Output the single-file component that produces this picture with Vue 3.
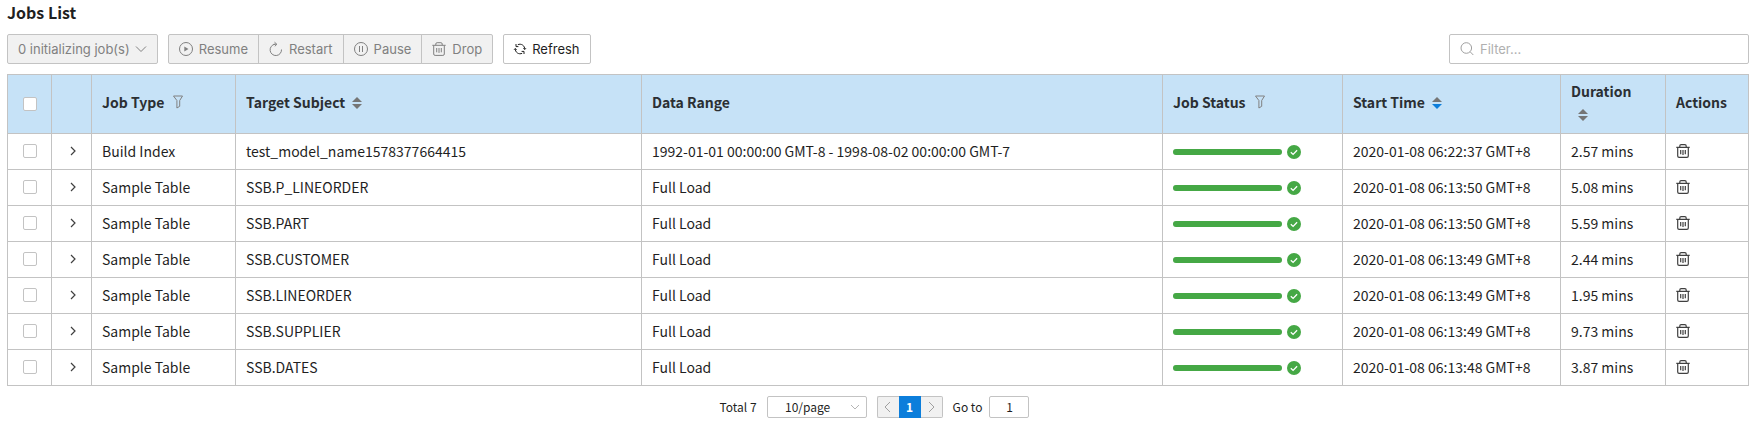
<script setup>
import { ref } from 'vue'

const filter = ref('')
const pageSize = ref('10')
const goTo = ref('1')

const rows = ref([
  ['Build Index', 'test_model_name1578377664415', '1992-01-01 00:00:00 GMT-8 - 1998-08-02 00:00:00 GMT-7', '2020-01-08 06:22:37 GMT+8', '2.57 mins'],
  ['Sample Table', 'SSB.P_LINEORDER', 'Full Load', '2020-01-08 06:13:50 GMT+8', '5.08 mins'],
  ['Sample Table', 'SSB.PART', 'Full Load', '2020-01-08 06:13:50 GMT+8', '5.59 mins'],
  ['Sample Table', 'SSB.CUSTOMER', 'Full Load', '2020-01-08 06:13:49 GMT+8', '2.44 mins'],
  ['Sample Table', 'SSB.LINEORDER', 'Full Load', '2020-01-08 06:13:49 GMT+8', '1.95 mins'],
  ['Sample Table', 'SSB.SUPPLIER', 'Full Load', '2020-01-08 06:13:49 GMT+8', '9.73 mins'],
  ['Sample Table', 'SSB.DATES', 'Full Load', '2020-01-08 06:13:48 GMT+8', '3.87 mins'],
].map(([type, target, range, start, duration]) => ({ type, target, range, start, duration, progress: 100, checked: false })))
</script>

<template>
  <main class="jobs">
    <svg class="defs" aria-hidden="true">
      <symbol id="trash" viewBox="0 0 14 14">
        <path d="M.3 3.300h13.400M3.800 3.300V2Q3.800.7 5.100.7h3.800Q10.200.7 10.200 2v1.300M1.700 3.500v8.500q0 1.400 1.400 1.400h7.800q1.400 0 1.400-1.400V3.500M4.700 6v4.300M7 6v4.900M9.300 6v4.300" />
      </symbol>
      <symbol id="funnel" viewBox="0 0 10 14">
        <path d="M.5 1h9L6.700 5.500v5.800L3.900 13V5.500z" />
      </symbol>
    </svg>

    <h1>Jobs List</h1>

    <div class="toolbar">
      <button class="btn menu" disabled>
        0 initializing job(s)
        <svg class="chev" viewBox="0 0 12 12"><path d="M1 3.500l5 5 5-5" /></svg>
      </button>
      <div class="group">
        <button class="btn" disabled>
          <svg viewBox="0 0 14 14"><circle cx="7" cy="7" r="6.500" /><path class="solid" d="M5.300 4.500v5L9.500 7z" /></svg>
          Resume
        </button>
        <button class="btn" disabled>
          <svg viewBox="0 0 14 14"><path d="M6 2.200A5.700 5.700 0 1 0 12.500 7.500M4.500 2.400L7.500 2.100M5.500.2L7.700 2.100 6 4.300" /></svg>
          Restart
        </button>
        <button class="btn" disabled>
          <svg viewBox="0 0 14 14"><circle cx="7" cy="7" r="6.500" /><path d="M5.500 4v6M8.500 4v6" /></svg>
          Pause
        </button>
        <button class="btn" disabled>
          <svg><use href="#trash" /></svg>
          Drop
        </button>
      </div>
      <button class="btn active">
        <svg viewBox="0 0 12 12"><path d="M3.800 1.700A4.800 4.800 0 0 1 10.700 6.300M8.200 10.300A4.800 4.800 0 0 1 1.300 5.700M2 1v2.600h2.400M10 11V8.400H7.600M0 6.800l1.300-1.300L2.600 6.800M9.400 5.200l1.300 1.300L12 5.200" /></svg>
        Refresh
      </button>
      <label class="search">
        <svg viewBox="0 0 14 14"><circle cx="6.300" cy="6" r="5.300" /><path d="M10.200 9.800L13.300 13" /></svg>
        <input v-model="filter" type="text" placeholder="Filter..." aria-label="Filter jobs">
      </label>
    </div>

    <table>
      <colgroup>
        <col class="c-check"><col class="c-expand"><col class="c-type"><col class="c-target"><col>
        <col class="c-status"><col class="c-start"><col class="c-duration"><col class="c-actions">
      </colgroup>
      <thead>
        <tr>
          <th class="center"><input type="checkbox" aria-label="Select all jobs"></th>
          <th></th>
          <th>Job Type<svg class="funnel"><use href="#funnel" /></svg></th>
          <th>Target Subject<svg class="sort" viewBox="0 0 10 12"><path d="M0 5l5-5 5 5z" /><path d="M0 7l5 5 5-5z" /></svg></th>
          <th>Data Range</th>
          <th>Job Status<svg class="funnel"><use href="#funnel" /></svg></th>
          <th>Start Time<svg class="sort" viewBox="0 0 10 12"><path d="M0 5l5-5 5 5z" /><path class="on" d="M0 7l5 5 5-5z" /></svg></th>
          <th>Duration <svg class="sort" viewBox="0 0 10 12"><path d="M0 5l5-5 5 5z" /><path d="M0 7l5 5 5-5z" /></svg></th>
          <th>Actions</th>
        </tr>
      </thead>
      <tbody>
        <tr v-for="row in rows" :key="row.target">
          <td class="center"><input v-model="row.checked" type="checkbox" :aria-label="'Select ' + row.target"></td>
          <td class="center">
            <button class="icon expand" :aria-label="'Expand ' + row.target"><svg viewBox="0 0 12 12"><path d="M4 2l4 4-4 4" /></svg></button>
          </td>
          <td>{{ row.type }}</td>
          <td>{{ row.target }}</td>
          <td>{{ row.range }}</td>
          <td class="progress">
            <div class="status">
              <div class="track"><div class="bar" :style="{ width: row.progress + '%' }"></div></div>
              <svg viewBox="0 0 14 14"><circle cx="7" cy="7" r="7" /><path d="M3.800 7.200l2.300 2.200 4-4.200" /></svg>
            </div>
          </td>
          <td>{{ row.start }}</td>
          <td>{{ row.duration }}</td>
          <td><button class="icon" :aria-label="'Drop ' + row.target"><svg><use href="#trash" /></svg></button></td>
        </tr>
      </tbody>
    </table>

    <nav class="pagination" aria-label="Pagination">
      <span>Total 7</span>
      <div class="size">
        <select v-model="pageSize" aria-label="Rows per page">
          <option value="10">10/page</option>
          <option value="20">20/page</option>
        </select>
        <svg viewBox="0 0 12 12"><path d="M2 4l4 4 4-4" /></svg>
      </div>
      <div class="pager">
        <button disabled aria-label="Previous page"><svg viewBox="0 0 12 12"><path d="M8 1L3 6l5 5" /></svg></button>
        <button class="current">1</button>
        <button disabled aria-label="Next page"><svg viewBox="0 0 12 12"><path d="M4 1l5 5-5 5" /></svg></button>
      </div>
      <label class="goto">Go to <input v-model="goTo" type="text"></label>
    </nav>
  </main>
</template>

<style>
body { background: #fff; }
</style>

<style scoped>
* { box-sizing: border-box; }
.jobs {
  padding: 0 6px 0 7px;
  color: #1f1f1f;
  font: 14px/20px "Noto Sans CJK SC", "Noto Sans", sans-serif;
}
svg { flex: none; width: 14px; height: 14px; fill: none; stroke: currentColor; stroke-width: 1; overflow: visible; }
.defs { position: absolute; width: 0; height: 0; }
button { cursor: pointer; }
button:disabled { cursor: not-allowed; }
h1 { margin: 0; padding: 2px 0 12px; font-size: 16px; line-height: 20px; font-weight: 700; }

.toolbar { display: flex; gap: 10px; margin-bottom: 10px; }
.btn {
  display: flex;
  align-items: center;
  gap: 6px;
  height: 30px;
  padding: 0 10px;
  border: 1px solid #c3c3c3;
  border-radius: 2px;
  background: #f1f1f1;
  color: #808080;
  font: 13px/20px Inter, "Liberation Sans", sans-serif;
  white-space: nowrap;
}
.btn.menu { gap: 5px; }
.btn.active { background: #fff; color: #1f1f1f; }
.btn.active svg { width: 12px; height: 12px; }
.btn .solid { fill: currentColor; stroke: none; }
.btn .chev { width: 12px; height: 12px; }
.group { display: flex; }
.group .btn { border-radius: 0; }
.group .btn + .btn { margin-left: -1px; }
.group .btn:first-child { border-radius: 2px 0 0 2px; }
.group .btn:last-child { border-radius: 0 2px 2px 0; }
.search {
  display: flex;
  align-items: center;
  gap: 6px;
  width: 300px;
  height: 30px;
  margin-left: auto;
  padding: 0 10px;
  border: 1px solid #c3c3c3;
  border-radius: 2px;
  color: #a0a0a0;
}
.search input { flex: 1; min-width: 0; padding: 0; border: 0; outline: 0; background: none; color: #1f1f1f; font: 13px/20px Inter, "Liberation Sans", sans-serif; }
.search input::placeholder { color: #b0b0b0; opacity: 1; }

table { width: 100%; table-layout: fixed; border-collapse: collapse; }
th, td { border: 1px solid #c3c3c3; padding: 0 10px 2px; text-align: left; vertical-align: middle; }
th { height: 59px; padding-bottom: 3px; background: #c6e2f7; color: #2b2f33; font-weight: 700; line-height: 23px; }
td { height: 36px; white-space: nowrap; }
.center { padding: 0 0 1px; text-align: center; }
.progress { padding-bottom: 0; }
.c-check { width: 44px; }
.c-expand { width: 40px; }
.c-type { width: 144px; }
.c-target { width: 406px; }
.c-status { width: 180px; }
.c-start { width: 218px; }
.c-duration { width: 105px; }
.c-actions { width: 83px; }
input[type="checkbox"] {
  appearance: none;
  display: block;
  width: 14px;
  height: 14px;
  margin: 0 auto;
  border: 1px solid #c3c3c3;
  border-radius: 2px;
  background: #fff;
}
input[type="checkbox"]:checked { background: #0c7edb; }
.funnel { width: 10px; height: 14px; margin-left: 9px; vertical-align: -1px; color: #808080; }
.sort { width: 10px; height: 12px; margin: 0 7px; vertical-align: -1px; fill: #757575; stroke: none; }
.sort .on { fill: #0c7edb; }
.icon { display: flex; padding: 0; border: 0; background: none; color: #404040; }
.icon svg { stroke-width: 1.2; }
.expand { margin: 0 auto; padding-left: 2px; }
.expand svg { width: 12px; height: 12px; }
.status { display: flex; align-items: center; gap: 5px; }
.track { width: 109px; height: 6px; border-radius: 3px; background: #e6e6e6; }
.bar { height: 100%; border-radius: 3px; background: #45a845; }
.status svg { fill: #45a845; stroke: none; }
.status path { fill: none; stroke: #fff; stroke-width: 1.3; }

.pagination { display: flex; justify-content: center; align-items: center; gap: 10px; margin-top: 10px; padding-right: 7px; font-size: 12px; line-height: 22px; }
.size { display: grid; align-items: center; width: 100px; }
.size > * { grid-area: 1 / 1; }
.size svg { justify-self: end; width: 12px; height: 12px; margin-right: 6px; color: #b5b5b5; pointer-events: none; }
select, .goto input { height: 22px; border: 1px solid #c3c3c3; border-radius: 2px; background: #fff; color: #1f1f1f; font: inherit; line-height: 20px; }
select { appearance: none; width: 100%; padding: 0 18px 0 0; text-align: center; text-align-last: center; }
.pager { display: flex; }
.pager button { display: flex; align-items: center; justify-content: center; width: 22px; height: 22px; padding: 0; border: 1px solid #c3c3c3; background: #f1f1f1; color: #a0a0a0; font: inherit; }
.pager button:first-child { border-right: 0; border-radius: 2px 0 0 2px; }
.pager button:last-child { border-left: 0; border-radius: 0 2px 2px 0; }
.pager .current { border: 0; background: #0c7edb; color: #fff; font-weight: 700; }
.pager svg { width: 12px; height: 12px; }
.goto { display: flex; align-items: center; gap: 7px; }
.goto input { width: 40px; padding: 0 0 2px; text-align: center; }
</style>
